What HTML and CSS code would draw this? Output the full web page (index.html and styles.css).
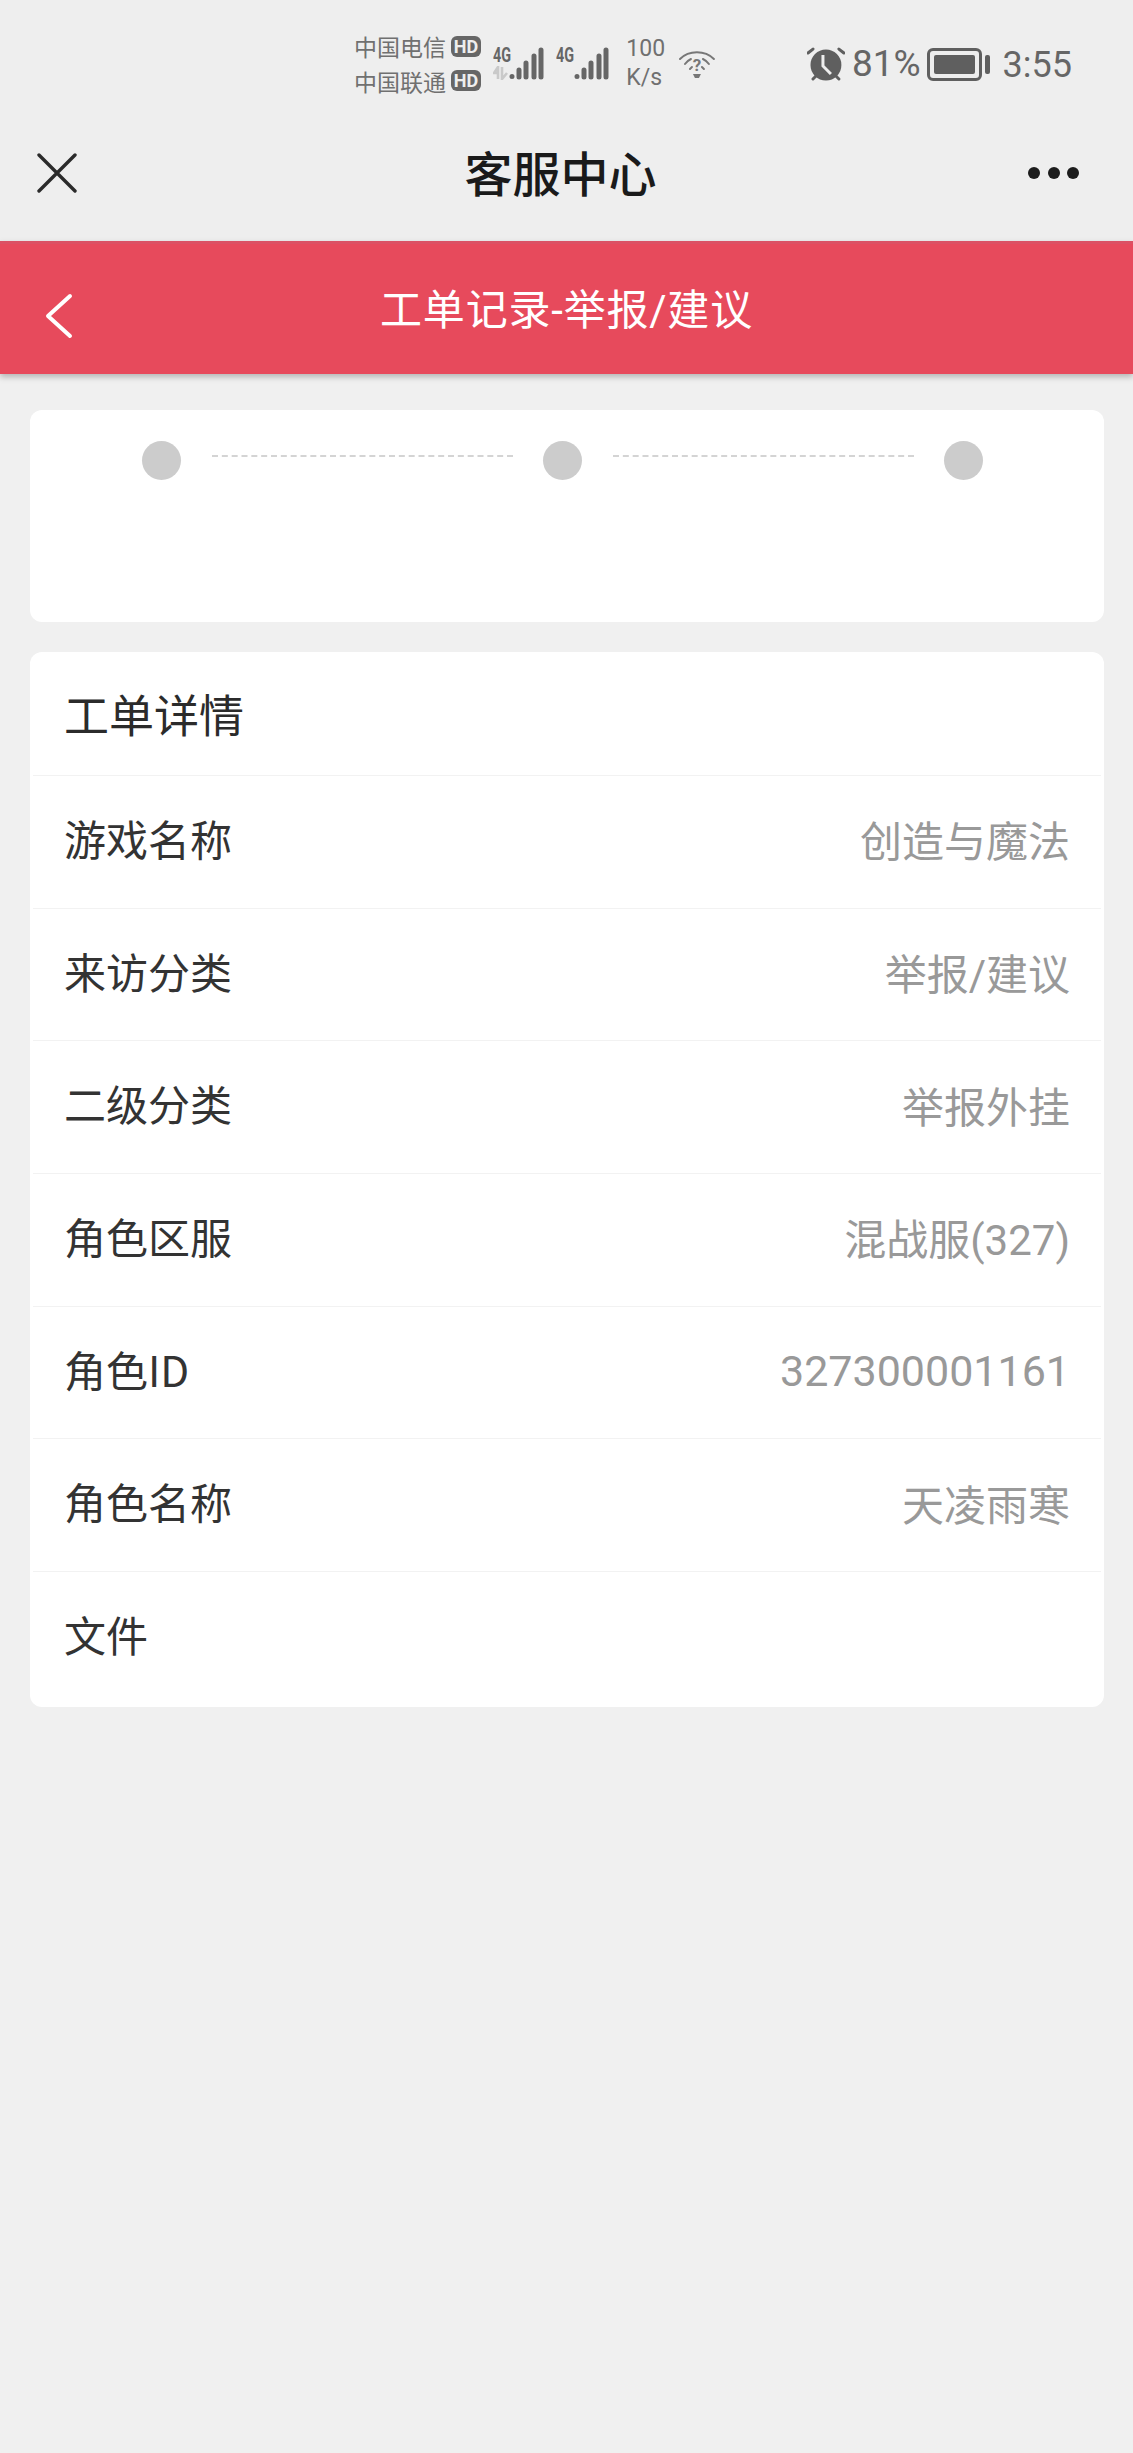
FILE: index.html
```html
<!DOCTYPE html>
<html lang="zh-CN">
<head>
  <meta charset="UTF-8" />
  <meta name="viewport" content="width=device-width, initial-scale=1.0"/>
  <title>客服中心</title>
  <link rel="stylesheet" href="styles.css">
</head>
<body>
  <!-- Barra de estado -->
  <div class="status-bar">
    <div class="carriers">
      <div class="carrier">中国电信<span class="hd">HD</span></div>
      <div class="carrier">中国联通<span class="hd">HD</span></div>
    </div>
    <div class="signal">
      <span class="net">4G</span>
      <svg class="arrows" width="18" height="14" viewBox="0 0 18 14"><path d="M5 13V1L1 7h4M9 1v12l5-6" fill="none" stroke="#c9c9c9" stroke-width="2.6"/></svg>
      <svg class="bars" width="36" height="34" viewBox="0 0 36 34"><g fill="none" stroke="#666" stroke-width="5" stroke-linecap="round"><path d="M4 30.5v.1M11 24v7M18 17v14M26 10v21M33 4v27"/></g></svg>
    </div>
    <div class="signal signal-two">
      <span class="net">4G</span>
      <svg class="bars" width="36" height="34" viewBox="0 0 36 34"><g fill="none" stroke="#666" stroke-width="5" stroke-linecap="round"><path d="M4 30.5v.1M11 24v7M18 17v14M26 10v21M33 4v27"/></g></svg>
    </div>
    <div class="speed"><span>100</span><span>K/s</span></div>
    <svg class="wifi" width="36" height="30" viewBox="0 0 36 30">
      <g fill="none" stroke="#777" stroke-width="2" stroke-linecap="round">
        <path d="M1 10C10 1 26 1 35 10"/>
        <path d="M6 15c2-3 4-4 6-5M30 15c-2-3-4-4-6-5"/>
        <path d="M11 20l2-2M25 20l-2-2"/>
      </g>
      <text x="18" y="22" class="wifi-mark">?</text>
      <path d="M14 25h8l-2 4h-4z" fill="#777"/>
    </svg>
    <svg class="alarm" width="38" height="34" viewBox="0 0 38 34"><g stroke="#5f5f5f" stroke-width="3" stroke-linecap="round" fill="none"><path d="M1 6l5-4M37 6l-5-4M6 32l3-3M32 32l-3-3"/></g><circle cx="19" cy="18" r="15.5" fill="#5f5f5f"/><path d="M16 8v11l8 8" fill="none" stroke="#eee" stroke-width="3"/></svg>
    <span class="battery-text">81%</span>
    <div class="battery"><div class="battery-level"></div></div>
    <div class="battery-nub"></div>
    <span class="time">3:55</span>
  </div>

  <!-- Barra del navegador -->
  <div class="nav-bar">
    <svg class="close-icon" width="40" height="40" viewBox="0 0 40 40"><path d="M2 2l36 36M38 2L2 38" stroke="#2a2a2a" stroke-width="3.4" stroke-linecap="round"/></svg>
    <div class="nav-title">客服中心</div>
    <div class="more"><i></i><i></i><i></i></div>
  </div>

  <!-- Cabecera roja -->
  <header class="page-header">
    <svg class="back-icon" width="28" height="46" viewBox="0 0 28 46"><path d="M25 3L3 23l22 20" fill="none" stroke="#fff" stroke-width="4" stroke-linecap="round" stroke-linejoin="round"/></svg>
    <h1>工单记录-举报/建议</h1>
  </header>

  <main class="content">
    <section class="card steps">
      <span class="dot"></span>
      <span class="dash"></span>
      <span class="dot"></span>
      <span class="dash"></span>
      <span class="dot"></span>
    </section>

    <section class="card details">
      <h2>工单详情</h2>
      <div class="row"><span>游戏名称</span><span class="value">创造与魔法</span></div>
      <div class="row"><span>来访分类</span><span class="value">举报/建议</span></div>
      <div class="row"><span>二级分类</span><span class="value">举报外挂</span></div>
      <div class="row"><span>角色区服</span><span class="value">混战服(327)</span></div>
      <div class="row"><span>角色ID</span><span class="value value-num">327300001161</span></div>
      <div class="row"><span>角色名称</span><span class="value">天凌雨寒</span></div>
      <div class="row"><span>文件</span></div>
    </section>
  </main>
</body>
</html>
```

FILE: styles.css
```css
* {
  box-sizing: border-box;
}

body {
  margin: 0;
  width: 1133px;
  min-height: 2453px;
  background-color: #f0f0f0;
  font-family: "Noto Sans CJK SC", "Noto Sans", sans-serif;
  color: #333;
}

/* Barra de estado */
.status-bar {
  height: 100px;
  padding: 29px 61px 0 354px;
  background-color: #eeeeee;
  display: flex;
  align-items: flex-start;
  color: #666;
}

.carriers {
  width: 128px;
  font-size: 23px;
  color: #707070;
}

.carrier {
  display: flex;
  align-items: center;
  height: 34.5px;
  line-height: 34.5px;
  white-space: nowrap;
}

.hd {
  margin-left: 5px;
  width: 30px;
  height: 21px;
  border-radius: 6px;
  background-color: #666;
  color: #eee;
  font-family: "Roboto", sans-serif;
  font-size: 18px;
  font-weight: 700;
  line-height: 21px;
  text-align: center;
}

.signal {
  position: relative;
  width: 52px;
  height: 52px;
  margin-left: 11px;
}

.signal-two {
  width: 53px;
  margin-left: 12px;
}

.net {
  position: absolute;
  left: 0;
  top: 16px;
  font-family: "Roboto", sans-serif;
  font-size: 20px;
  font-weight: 700;
  line-height: 20px;
  color: #666;
  transform: scaleX(0.72);
  transform-origin: left;
}

.arrows {
  position: absolute;
  left: 0;
  top: 37px;
}

.bars {
  position: absolute;
  right: 0;
  top: 17px;
}

.speed {
  width: 53px;
  margin: 5px 0 0 17px;
  display: flex;
  flex-direction: column;
  font-family: "Roboto", sans-serif;
  font-size: 23px;
  line-height: 29px;
  color: #707070;
}

.wifi {
  margin: 20px 0 0 0;
}

.wifi-mark {
  fill: #777;
  font-family: "Roboto", sans-serif;
  font-size: 17px;
  font-weight: 700;
  text-anchor: middle;
}

.alarm {
  margin: 18px 0 0 92px;
}

.battery-text {
  margin: 13px 0 0 7px;
  width: 75px;
  font-family: "Roboto", sans-serif;
  font-size: 37px;
  line-height: 44px;
}

.battery {
  width: 55px;
  height: 33px;
  margin-top: 19px;
  padding: 4px;
  border: 3px solid #5f5f5f;
  border-radius: 6px;
}

.battery-level {
  height: 100%;
  background-color: #5f5f5f;
  border-radius: 2px;
}

.battery-nub {
  width: 5px;
  height: 19px;
  margin: 26px 0 0 3px;
  background-color: #5f5f5f;
  border-radius: 2px;
}

.time {
  margin: 14px 0 0 13px;
  font-family: "Roboto", sans-serif;
  font-size: 36px;
  line-height: 44px;
}

/* Barra del navegador */
.nav-bar {
  position: relative;
  height: 141px;
  background-color: #eeeeee;
  display: flex;
  justify-content: center;
  align-items: center;
}

.close-icon {
  position: absolute;
  left: 37px;
  top: 53px;
}

.nav-title {
  margin: 0 12px 0 0;
  font-size: 48px;
  font-weight: 500;
  color: #1a1a1a;
}

.more {
  position: absolute;
  right: 54px;
  top: 67px;
  display: flex;
  gap: 7.5px;
}

.more i {
  width: 12px;
  height: 12px;
  border-radius: 50%;
  background-color: #1c1c1c;
}

/* Cabecera roja */
.page-header {
  position: relative;
  height: 133px;
  padding-bottom: 6px;
  background-color: #e74a5c;
  border-top: 3px solid #dc5164;
  box-shadow: 0 3px 6px rgba(0, 0, 0, 0.25);
  display: flex;
  justify-content: center;
  align-items: center;
}

.page-header h1 {
  margin: 0;
  font-family: "Roboto", "Noto Sans CJK SC", sans-serif;
  font-size: 42px;
  font-weight: 400;
  letter-spacing: 0.8px;
  color: #fff;
}

.back-icon {
  position: absolute;
  left: 45px;
  top: 49px;
}

/* Contenido */
.content {
  padding: 36px 29px 0 30px;
  display: flex;
  flex-direction: column;
  gap: 30px;
}

.card {
  background-color: #fff;
  border-radius: 12px;
}

.steps {
  height: 212px;
  padding: 31px 0 0 112px;
  display: flex;
  align-items: flex-start;
}

.dot {
  flex: none;
  width: 39px;
  height: 39px;
  border-radius: 50%;
  background-color: #cccccc;
}

.dash {
  flex: none;
  width: 301px;
  margin: 14px 30px 0 31px;
  border-top: 2px dashed #d4d4d4;
}

.details {
  height: 1055px;
  padding: 0 3px;
}

.details h2 {
  margin: 0;
  height: 123px;
  padding-left: 31px;
  font-size: 45px;
  font-weight: 400;
  line-height: 123px;
  color: #2b2b2b;
}

.row {
  height: 132.7px;
  padding: 0 31px 9px;
  border-top: 1px solid #f2f2f2;
  display: flex;
  justify-content: space-between;
  align-items: center;
  font-size: 42px;
  color: #333;
}

.value {
  margin-top: 3px;
  font-family: "Roboto", "Noto Sans CJK SC", sans-serif;
  color: #999;
}

.value-num {
  margin-top: 6px;
  font-size: 43px;
}
```
